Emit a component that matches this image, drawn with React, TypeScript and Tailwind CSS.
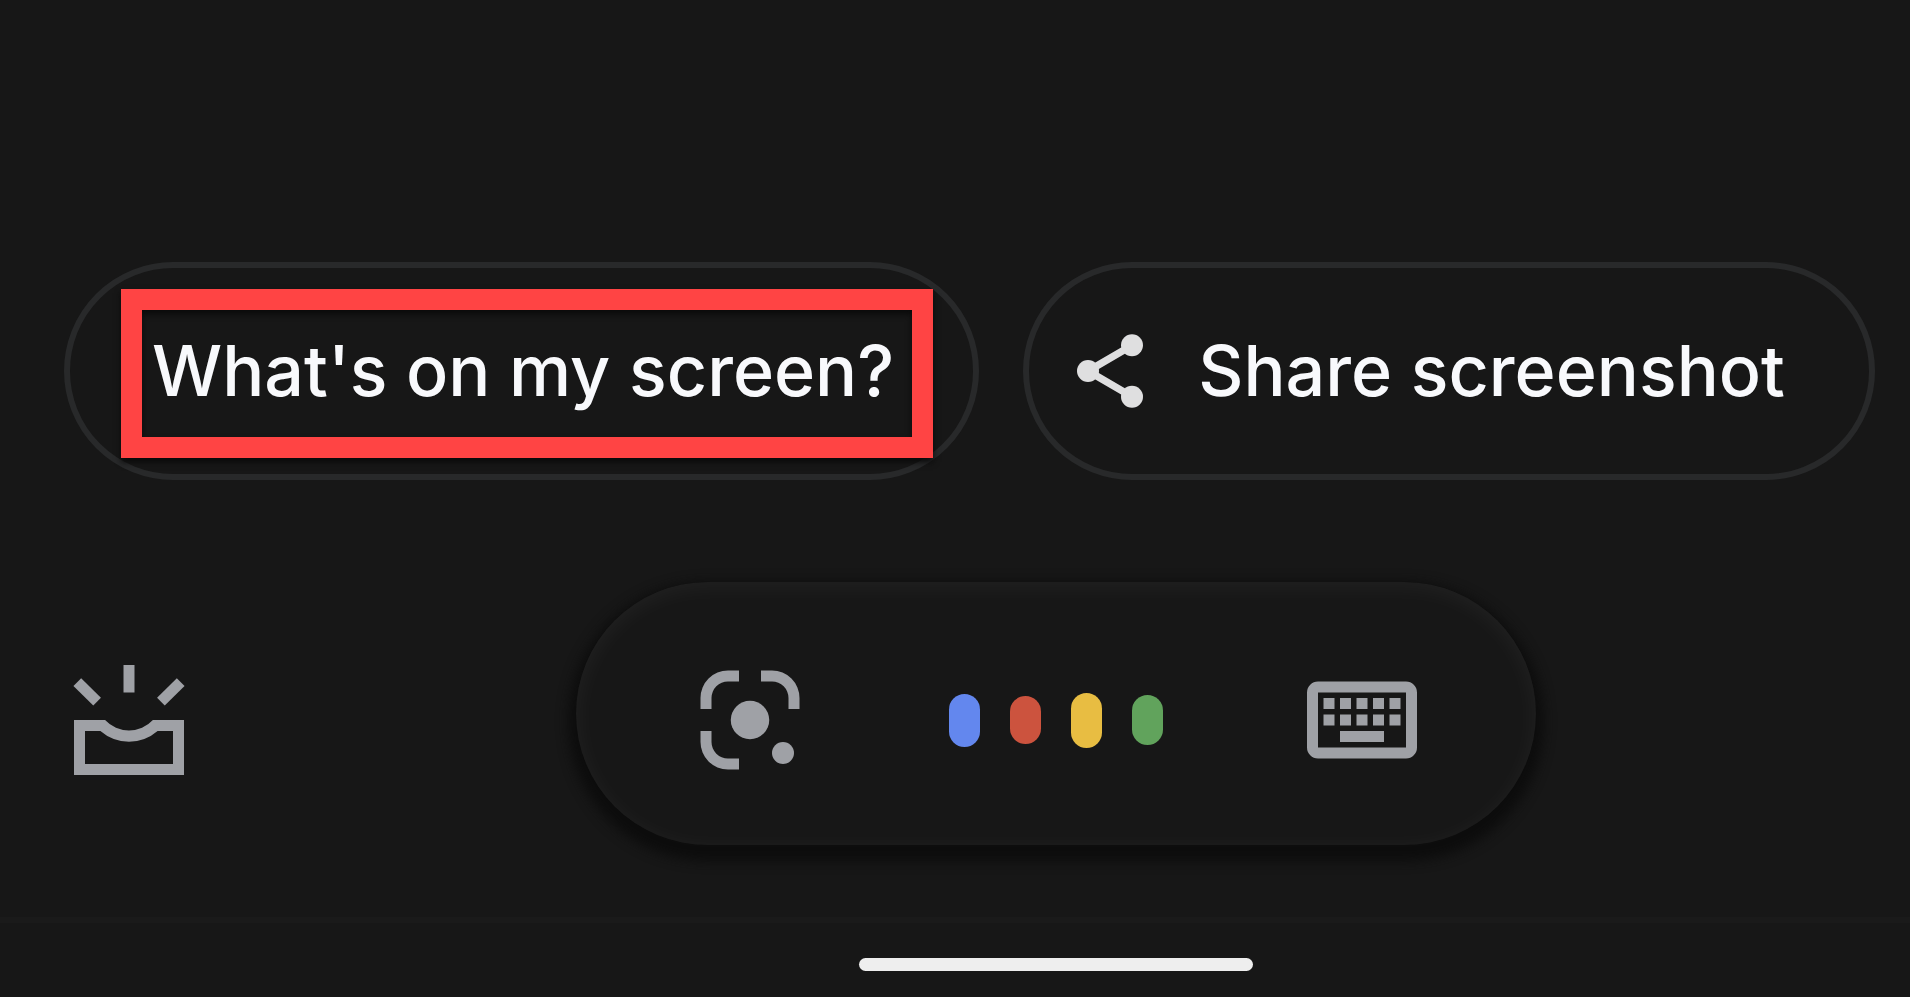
import type { ReactNode } from "react";

const chipClass =
  "relative flex h-[218px] shrink-0 items-center rounded-full border-[6px] border-[#28292a] text-[70px] leading-[84px] font-medium whitespace-nowrap text-[#f8f9fc]";

function ShareIcon() {
  return (
    <svg viewBox="0 0 24 24" className="size-[88px] shrink-0 text-[#dfdfe0]" fill="currentColor" aria-hidden="true">
      <path d="M18 5 6 12l12 7" fill="none" stroke="currentColor" strokeWidth="2" />
      <circle cx="18" cy="5" r="3" />
      <circle cx="6" cy="12" r="3" />
      <circle cx="18" cy="19" r="3" />
    </svg>
  );
}

function SnapshotIcon() {
  return (
    <svg viewBox="0 0 24 24" className="size-[132px]" fill="currentColor" aria-hidden="true">
      <path d="M11 2h2v5h-2z" />
      <path d="M1.9 5.8 3.3 4.4 6.9 7.95 5.5 9.35z" />
      <path d="M22.1 5.8 20.7 4.4 17.1 7.95 18.5 9.35z" />
      <path
        fillRule="evenodd"
        d="M2 12h5.65A5.93 5.93 0 0 0 16.35 12H22v10H2zM4 14v6h16v-6h-2.8A7.9 7.9 0 0 1 6.8 14z"
      />
    </svg>
  );
}

function LensIcon() {
  return (
    <svg viewBox="0 0 24 24" className="size-[132px]" fill="currentColor" aria-hidden="true">
      <path d="M3 10V8a5 5 0 0 1 5-5h2v2H8a3 3 0 0 0-3 3v2z" />
      <path d="M14 3h2a5 5 0 0 1 5 5v2h-2V8a3 3 0 0 0-3-3h-2z" />
      <path d="M3 14h2v2a3 3 0 0 0 3 3h2v2H8a5 5 0 0 1-5-5z" />
      <circle cx="12" cy="12" r="3.5" />
      <circle cx="18" cy="18" r="2" />
    </svg>
  );
}

function KeyboardIcon() {
  const columns = [5, 8, 11, 14, 17];
  return (
    <svg viewBox="0 0 24 24" className="size-[132px]" fill="currentColor" aria-hidden="true">
      <path
        fillRule="evenodd"
        d="M4 5h16a2 2 0 0 1 2 2v10a2 2 0 0 1-2 2H4a2 2 0 0 1-2-2V7a2 2 0 0 1 2-2zM4 7v10h16V7z"
      />
      {columns.map((x) => (
        <g key={x}>
          <rect x={x} y="8" width="2" height="2" />
          <rect x={x} y="11" width="2" height="2" />
        </g>
      ))}
      <rect x="8" y="14" width="8" height="2" />
    </svg>
  );
}

function IconButton({ label, children }: { label: string; children: ReactNode }) {
  return (
    <button type="button" aria-label={label} className="shrink-0 text-[#9fa1a6]">
      {children}
    </button>
  );
}

export default function App() {
  return (
    <div className="flex min-h-screen flex-col justify-end overflow-hidden bg-[#171717] font-['Inter',sans-serif]">
      <div className="flex gap-[44px] pl-16">
        <button type="button" className={`${chipClass} pr-[79px] pl-[82px]`}>
          What's on my screen?
          <span className="pointer-events-none absolute top-[21px] right-[40px] bottom-[16px] left-[51px] border-[21px] border-[#ff4444] shadow-[0_4px_6px_#0a0a0a,inset_0_4px_6px_#0a0a0a]" />
        </button>
        <button type="button" className={`${chipClass} gap-11 pr-[84px] pl-[37px]`}>
          <ShareIcon />
          Share screenshot
        </button>
      </div>

      <div className="mt-[102px] mb-[72px] flex items-end pl-[63px]">
        <div className="flex pb-[59px]">
          <IconButton label="Open snapshot">
            <SnapshotIcon />
          </IconButton>
        </div>
        <div className="flex flex-1 justify-center pl-[6px]">
          <div className="flex items-center gap-[133px] rounded-full bg-[#171717] px-[108px] pt-[72px] pb-[59px] shadow-[0_8px_12px_8px_#0d0d0d,inset_0_4px_24px_rgba(255,255,255,0.05)]">
            <IconButton label="Google Lens">
              <LensIcon />
            </IconButton>
            <button type="button" aria-label="Listening" className="flex items-center gap-[30px]">
              <span className="h-[53px] w-[31px] rounded-full bg-[#6387ee]" />
              <span className="h-[48px] w-[31px] rounded-full bg-[#cc533e]" />
              <span className="h-[55px] w-[31px] rounded-full bg-[#e8bd42]" />
              <span className="h-[50px] w-[31px] rounded-full bg-[#61a35c]" />
            </button>
            <IconButton label="Type a message">
              <KeyboardIcon />
            </IconButton>
          </div>
        </div>
      </div>

      <div className="flex justify-center border-t-[6px] border-[#1a1a1a] pt-[35px] pb-[26px] pl-[202px]">
        <div className="h-[13px] w-[394px] rounded-full bg-[#eeeeee]" />
      </div>
    </div>
  );
}
